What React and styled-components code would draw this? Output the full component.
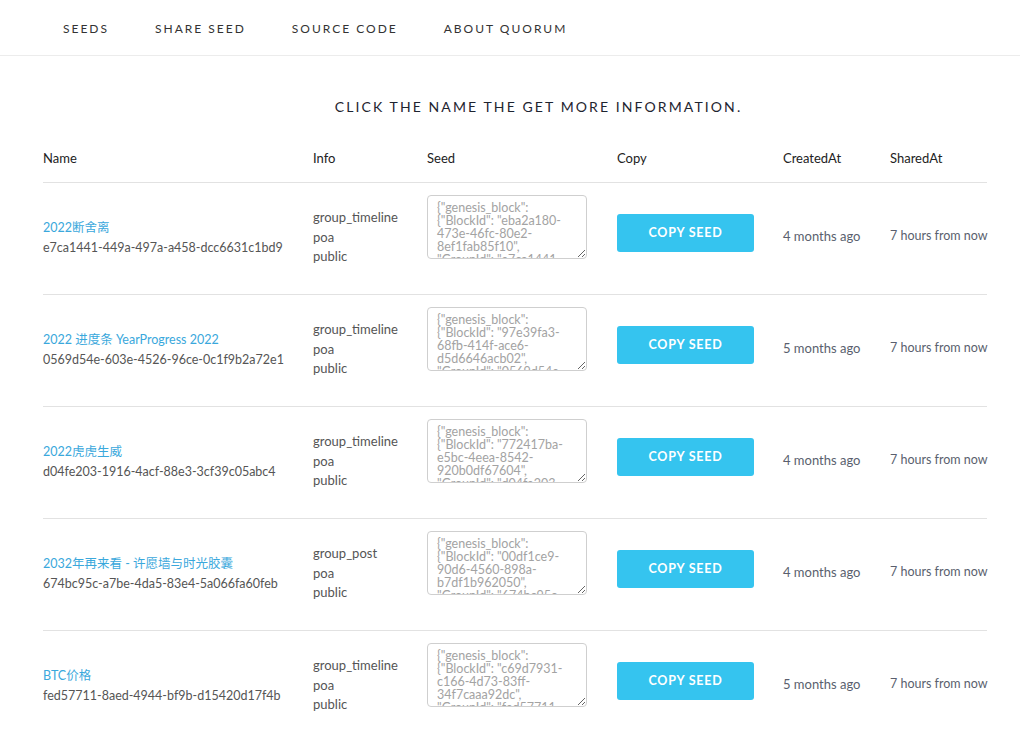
import React from "react";
import styled, { createGlobalStyle } from "styled-components";

const GlobalStyle = createGlobalStyle`
  body {
    margin: 0;
    background: #fff;
    font-family: Lato, "Noto Sans CJK SC", sans-serif;
    color: #555;
  }
`;

const Nav = styled.nav`
  height: 55px;
  border-bottom: 1px solid #ececec;
  display: flex;
  align-items: center;
  padding-left: 40px;
`;

const NavItem = styled.a`
  padding: 1px 23px 0;
  font-size: 12px;
  font-weight: 400;
  letter-spacing: 2px;
  color: #333;
  text-transform: uppercase;
  cursor: pointer;
`;

const Main = styled.main`
  padding: 0 33px 0 43px;
`;

const Title = styled.h2`
  margin: 0;
  padding: 41px 0 0 47px;
  text-align: center;
  font-size: 14px;
  font-weight: 400;
  letter-spacing: 2.1px;
  color: #1e2430;
  line-height: 20px;
`;

const Table = styled.div`
  margin-top: 31px;
  width: 944px;
`;

const cols = "270px 114px 190px 166px 107px 97px";

const HeadRow = styled.div`
  display: grid;
  grid-template-columns: ${cols};
  padding-bottom: 14px;
  border-bottom: 1px solid #e2e2e2;
`;

const HeadCell = styled.div`
  font-size: 13px;
  line-height: 20px;
  color: #222;
`;

const Row = styled.div`
  display: grid;
  grid-template-columns: ${cols};
  align-items: center;
  height: 111px;
  border-bottom: 1px solid #e2e2e2;
`;

const Cell = styled.div`
  font-size: 13px;
  line-height: 20px;
  color: #555;
  white-space: nowrap;
`;

const NameCell = styled(Cell)`
  font-size: 12.5px;
  margin-bottom: 2px;
`;

const NameLink = styled.a`
  display: block;
  color: #3aa8dc;
  font-size: 12.5px;
  cursor: pointer;
`;

const InfoCell = styled(Cell)`
  line-height: 19.5px;
  margin-bottom: 2px;
`;

const SeedBox = styled.textarea`
  align-self: start;
  margin-top: 12px;
  width: 160px;
  height: 64px;
  box-sizing: border-box;
  padding: 5px 9px 0;
  border: 1px solid #cfcfcf;
  border-radius: 4px;
  font-family: Lato, sans-serif;
  font-size: 12.5px;
  line-height: 13px;
  color: #a3a3a3;
  resize: vertical;
  overflow: hidden;
`;

const CopyButton = styled.button`
  width: 137px;
  height: 38px;
  margin-bottom: 12px;
  border: none;
  border-radius: 3px;
  background: #35c4ef;
  color: #fff;
  font-family: Lato, sans-serif;
  font-weight: 700;
  font-size: 12.5px;
  letter-spacing: 0.8px;
  cursor: pointer;
`;

const DateCell = styled(Cell)`
  color: #5a5f6e;
  margin-bottom: 6px;
`;

const SharedCell = styled(DateCell)`
  font-size: 12.5px;
`;

const seeds = [
  {
    name: "2022断舍离",
    id: "e7ca1441-449a-497a-a458-dcc6631c1bd9",
    type: "group_timeline",
    block: "eba2a180-473e-46fc-80e2-8ef1fab85f10",
    created: "4 months ago",
  },
  {
    name: "2022 进度条 YearProgress 2022",
    id: "0569d54e-603e-4526-96ce-0c1f9b2a72e1",
    type: "group_timeline",
    block: "97e39fa3-68fb-414f-ace6-d5d6646acb02",
    created: "5 months ago",
  },
  {
    name: "2022虎虎生威",
    id: "d04fe203-1916-4acf-88e3-3cf39c05abc4",
    type: "group_timeline",
    block: "772417ba-e5bc-4eea-8542-920b0df67604",
    created: "4 months ago",
  },
  {
    name: "2032年再来看 - 许愿墙与时光胶囊",
    id: "674bc95c-a7be-4da5-83e4-5a066fa60feb",
    type: "group_post",
    block: "00df1ce9-90d6-4560-898a-b7df1b962050",
    created: "4 months ago",
  },
  {
    name: "BTC价格",
    id: "fed57711-8aed-4944-bf9b-d15420d17f4b",
    type: "group_timeline",
    block: "c69d7931-c166-4d73-83ff-34f7caaa92dc",
    created: "5 months ago",
  },
];

const App = () => {
  return (
    <>
      <GlobalStyle />
      <Nav>
        <NavItem>Seeds</NavItem>
        <NavItem>Share Seed</NavItem>
        <NavItem>Source Code</NavItem>
        <NavItem>About Quorum</NavItem>
      </Nav>
      <Main>
        <Title>CLICK THE NAME THE GET MORE INFORMATION.</Title>
        <Table>
          <HeadRow>
            <HeadCell>Name</HeadCell>
            <HeadCell>Info</HeadCell>
            <HeadCell>Seed</HeadCell>
            <HeadCell>Copy</HeadCell>
            <HeadCell>CreatedAt</HeadCell>
            <HeadCell>SharedAt</HeadCell>
          </HeadRow>
          {seeds.map((s) => (
            <Row key={s.id}>
              <NameCell>
                <NameLink>{s.name}</NameLink>
                {s.id}
              </NameCell>
              <InfoCell>
                {s.type}
                <br />
                poa
                <br />
                public
              </InfoCell>
              <SeedBox
                readOnly
                value={`{"genesis_block": {"BlockId": "${s.block}", "GroupId": "${s.id}", "ProducerPubKey": "", "Hash": ""}, "group_id": "${s.id}", "group_name": "${s.name}", "app_key": "${s.type}"}`}
              />
              <div>
                <CopyButton>COPY SEED</CopyButton>
              </div>
              <DateCell>{s.created}</DateCell>
              <SharedCell>7 hours from now</SharedCell>
            </Row>
          ))}
        </Table>
      </Main>
    </>
  );
};

export default App;
